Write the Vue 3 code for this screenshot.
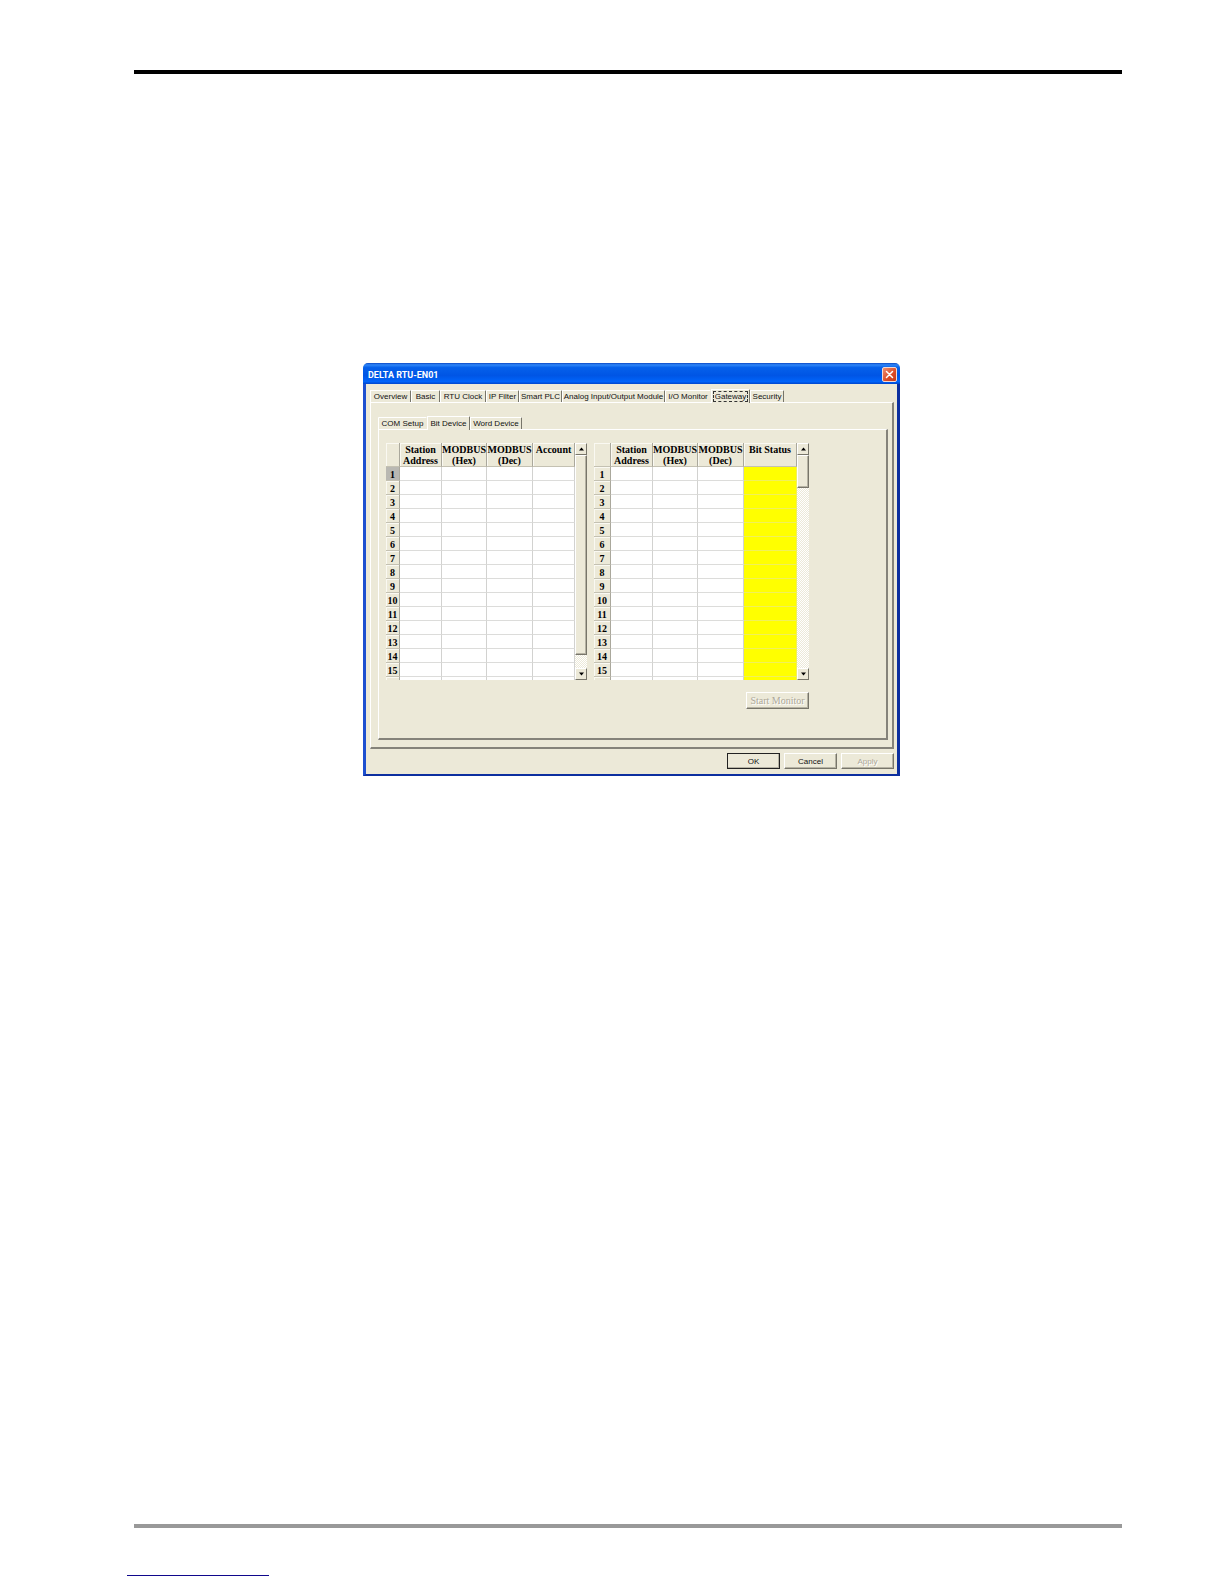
<template>
  <div class="page">
    <hr class="rule rule-top" />

    <main class="figure">
      <section class="dialog" aria-label="DELTA RTU-EN01">
        <header class="titlebar">
          <h1>DELTA RTU-EN01</h1>
          <button class="close" type="button" aria-label="Close">
            <svg viewBox="0 0 15 15" width="15" height="15">
              <path d="M4.5 4.5 L10.5 10.5 M10.5 4.5 L4.5 10.5" stroke="#fff" stroke-width="1.5" stroke-linecap="round" />
            </svg>
          </button>
        </header>

        <div class="dialog-body">
          <div class="tabs outer-tabs" role="tablist">
            <button
              v-for="tab in tabs"
              :key="tab.label"
              type="button"
              role="tab"
              class="tab"
              :class="{ selected: tab.label === activeTab }"
              :aria-selected="tab.label === activeTab"
              :style="{ width: tab.width + 'px' }"
              @click="activeTab = tab.label"
            >
              <span>{{ tab.label }}</span>
            </button>
          </div>

          <div class="panel outer-panel">
            <div class="tabs inner-tabs" role="tablist">
              <button
                v-for="tab in subTabs"
                :key="tab.label"
                type="button"
                role="tab"
                class="tab"
                :class="{ selected: tab.label === activeSubTab }"
                :aria-selected="tab.label === activeSubTab"
                :style="{ width: tab.width + 'px' }"
                @click="activeSubTab = tab.label"
              >
                <span>{{ tab.label }}</span>
              </button>
            </div>

            <div class="panel inner-panel">
              <div class="workspace">
                <div class="grids">
                  <div v-for="grid in grids" :key="grid.id" class="grid">
                    <div class="grid-view">
                      <table>
                        <colgroup>
                          <col v-for="(w, i) in grid.widths" :key="i" :style="{ width: w + 'px' }" />
                        </colgroup>
                        <thead>
                          <tr>
                            <th></th>
                            <th v-for="(col, i) in grid.columns" :key="i" scope="col">
                              <div v-for="line in col" :key="line">{{ line }}</div>
                            </th>
                          </tr>
                        </thead>
                        <tbody>
                          <tr v-for="n in rowCount" :key="n">
                            <th scope="row" :class="{ current: n === grid.currentRow }">{{ n }}</th>
                            <td
                              v-for="(col, i) in grid.columns"
                              :key="i"
                              :class="{ status: col[0] === 'Bit Status' }"
                            ></td>
                          </tr>
                          <!-- top edge of the next row -->
                          <tr>
                            <th></th>
                            <td
                              v-for="(col, i) in grid.columns"
                              :key="i"
                              :class="{ status: col[0] === 'Bit Status' }"
                            ></td>
                          </tr>
                        </tbody>
                      </table>
                    </div>
                    <div class="scrollbar">
                      <button type="button" class="arrow" aria-label="Scroll up">
                        <svg viewBox="0 0 7 4" width="7" height="4"><path d="M3.5 0.5 L6 3.5 H1 Z" /></svg>
                      </button>
                      <div class="track">
                        <div class="thumb" :style="{ height: grid.thumb + 'px' }"></div>
                      </div>
                      <button type="button" class="arrow" aria-label="Scroll down">
                        <svg viewBox="0 0 7 4" width="7" height="4"><path d="M3.5 3.5 L6 0.5 H1 Z" /></svg>
                      </button>
                    </div>
                  </div>
                </div>
                <button type="button" class="btn btn-monitor" disabled>Start Monitor</button>
              </div>
            </div>
          </div>

          <footer class="actions">
            <button type="button" class="btn btn-default">OK</button>
            <button type="button" class="btn">Cancel</button>
            <button type="button" class="btn" disabled>Apply</button>
          </footer>
        </div>
      </section>
    </main>

    <hr class="rule rule-bottom" />
    <div class="link-line"></div>
  </div>
</template>

<script setup>
import { ref } from 'vue'

const activeTab = ref('Gateway')
const activeSubTab = ref('Bit Device')

const tabs = [
  { label: 'Overview', width: 41 },
  { label: 'Basic', width: 29 },
  { label: 'RTU Clock', width: 46 },
  { label: 'IP Filter', width: 33 },
  { label: 'Smart PLC', width: 43 },
  { label: 'Analog Input/Output Module', width: 103 },
  { label: 'I/O Monitor', width: 46 },
  { label: 'Gateway', width: 39 },
  { label: 'Security', width: 34 }
]

const subTabs = [
  { label: 'COM Setup', width: 49 },
  { label: 'Bit Device', width: 43 },
  { label: 'Word Device', width: 52 }
]

const rowCount = 15

const baseColumns = [
  ['Station', 'Address'],
  ['MODBUS', '(Hex)'],
  ['MODBUS', '(Dec)']
]

const grids = [
  {
    id: 'setup',
    columns: [...baseColumns, ['Account']],
    widths: [14, 42, 45, 46, 42],
    currentRow: 1,
    thumb: 200
  },
  {
    id: 'status',
    columns: [...baseColumns, ['Bit Status']],
    widths: [17, 42, 45, 46, 53],
    currentRow: null,
    thumb: 33
  }
]
</script>

<style>
body {
  margin: 0;
  background: #fff;
}
</style>

<style scoped>
.page {
  box-sizing: border-box;
  min-height: 100vh;
  padding: 70px 102px 8px 134px;
  display: flex;
  flex-direction: column;
  font-family: 'Liberation Sans', Arial, sans-serif;
  font-size: 8px;
  color: #111;
}

button {
  font: inherit;
  color: inherit;
  padding: 0;
  margin: 0;
  box-sizing: border-box;
}

.rule {
  width: 100%;
  height: 4px;
  margin: 0;
  border: 0;
  flex-shrink: 0;
}

.rule-top {
  background: #000;
}

.rule-bottom {
  margin-top: auto;
  background: #999;
}

.link-line {
  width: 142px;
  height: 1px;
  margin: 47px 0 0 -7px;
  background: #10088c;
}

.figure {
  display: flex;
  justify-content: center;
  padding: 289px 0 40px 7px;
}

.dialog {
  box-sizing: border-box;
  width: 537px;
  background: #ece9d8;
  border-radius: 5px 5px 0 0;
  overflow: hidden;
}

.titlebar {
  display: flex;
  align-items: center;
  justify-content: space-between;
  height: 21px;
  box-sizing: border-box;
  padding: 2px 3px 0 5px;
  background: linear-gradient(#0a48c4 0%, #2f86f8 9%, #0560ea 22%, #0055e5 60%, #0064fa 88%, #0046cc 100%);
}

.titlebar h1 {
  margin: 0;
  font-family: Roboto, 'Liberation Sans', sans-serif;
  font-size: 9px;
  font-weight: 700;
  line-height: 13px;
  padding-top: 2px;
  color: #fff;
}

.close {
  display: flex;
  width: 15px;
  height: 15px;
  border: 1px solid #f4d9d2;
  border-radius: 2px;
  background: linear-gradient(135deg, #ee8f70, #dc4a26 60%, #c43c1a);
  align-items: center;
  justify-content: center;
}

.close svg {
  flex-shrink: 0;
}

.dialog-body {
  border: solid #0c2f9f;
  border-width: 0 3px 2px;
  border-left-color: #1d50d0;
  padding: 5px 3px 5px 4px;
}

/* tab strips */
.tabs {
  display: flex;
  align-items: flex-end;
  position: relative;
}

.outer-tabs {
  height: 13px;
}

.inner-tabs {
  height: 14px;
}

.tab {
  display: flex;
  align-items: center;
  justify-content: center;
  height: 12px;
  border: solid #fff;
  border-width: 1px 0 0 1px;
  border-right: 1px solid #77756a;
  border-radius: 1px 1px 0 0;
  background: #ece9d8;
  white-space: nowrap;
}

.tab.selected {
  height: 14px;
  margin-bottom: -1px;
  padding-bottom: 1px;
}

.tab:has(+ .selected) {
  border-right-color: transparent;
}

.outer-tabs .tab.selected span {
  line-height: 9px;
  outline: 1px dashed #333;
  padding: 0 1px;
}

.panel {
  border: solid #fff;
  border-width: 1px 2px 2px 1px;
  border-right-color: #85837a;
  border-bottom-color: #85837a;
}

.outer-panel {
  padding: 12px 4px 7px 7px;
}

.inner-panel {
  padding: 13px 7px 29px;
}

.workspace {
  display: inline-flex;
  flex-direction: column;
  align-items: flex-end;
  vertical-align: top;
}

.grids {
  display: flex;
  gap: 7px;
}

.grid {
  display: flex;
  height: 237px;
}

.grid-view {
  overflow: hidden;
}

table {
  border-collapse: separate;
  border-spacing: 0;
  table-layout: fixed;
  width: min-content;
  background: #fff;
  font-family: 'Liberation Serif', 'Times New Roman', serif;
  font-size: 10px;
  line-height: 11px;
  color: #000;
}

th,
td {
  box-sizing: border-box;
  height: 14px;
  padding: 0;
  border-right: 1px solid #d2d2d0;
  border-bottom: 1px solid #dcdcda;
}

th {
  background: #ece9d8;
  border-right-color: #aaa89c;
  border-bottom-color: #c4c1b2;
  box-shadow: inset 1px 1px #faf9f2;
  font-weight: 700;
  white-space: nowrap;
}

tbody th {
  padding-top: 1px;
}

thead th {
  height: 24px;
  vertical-align: top;
  padding-top: 1px;
}

th.current {
  background: #b9b8b2;
  box-shadow: none;
}

td.status {
  background: #ff0;
  border-color: #f0f05a;
}

/* scroll bars */
.scrollbar {
  display: flex;
  flex-direction: column;
  width: 12px;
}

.arrow {
  display: flex;
  align-items: center;
  justify-content: center;
  height: 12px;
  flex-shrink: 0;
}

.arrow,
.thumb,
.btn {
  background: #ece9d8;
  border: 1px solid #fff;
  border-right-color: #77756a;
  border-bottom-color: #77756a;
  border-radius: 0;
}

.track {
  flex: 1;
  background: repeating-conic-gradient(#ece9d8 0 25%, #fff 0 50%) 0 0 / 2px 2px;
}

.thumb {
  box-sizing: border-box;
  box-shadow: inset -1px -1px #b5b2a3;
}

.btn {
  width: 53px;
  height: 16px;
  box-shadow: inset -1px -1px #b5b2a3;
}

.btn:disabled {
  color: #aca899;
  text-shadow: 1px 1px #fff;
}

.btn-default {
  border-color: #222;
}

.btn-monitor {
  width: 63px;
  height: 17px;
  margin-top: 12px;
  font-family: 'Liberation Serif', 'Times New Roman', serif;
  font-size: 10px;
}

.actions {
  display: flex;
  justify-content: flex-end;
  gap: 4px;
  margin-top: 4px;
}
</style>
